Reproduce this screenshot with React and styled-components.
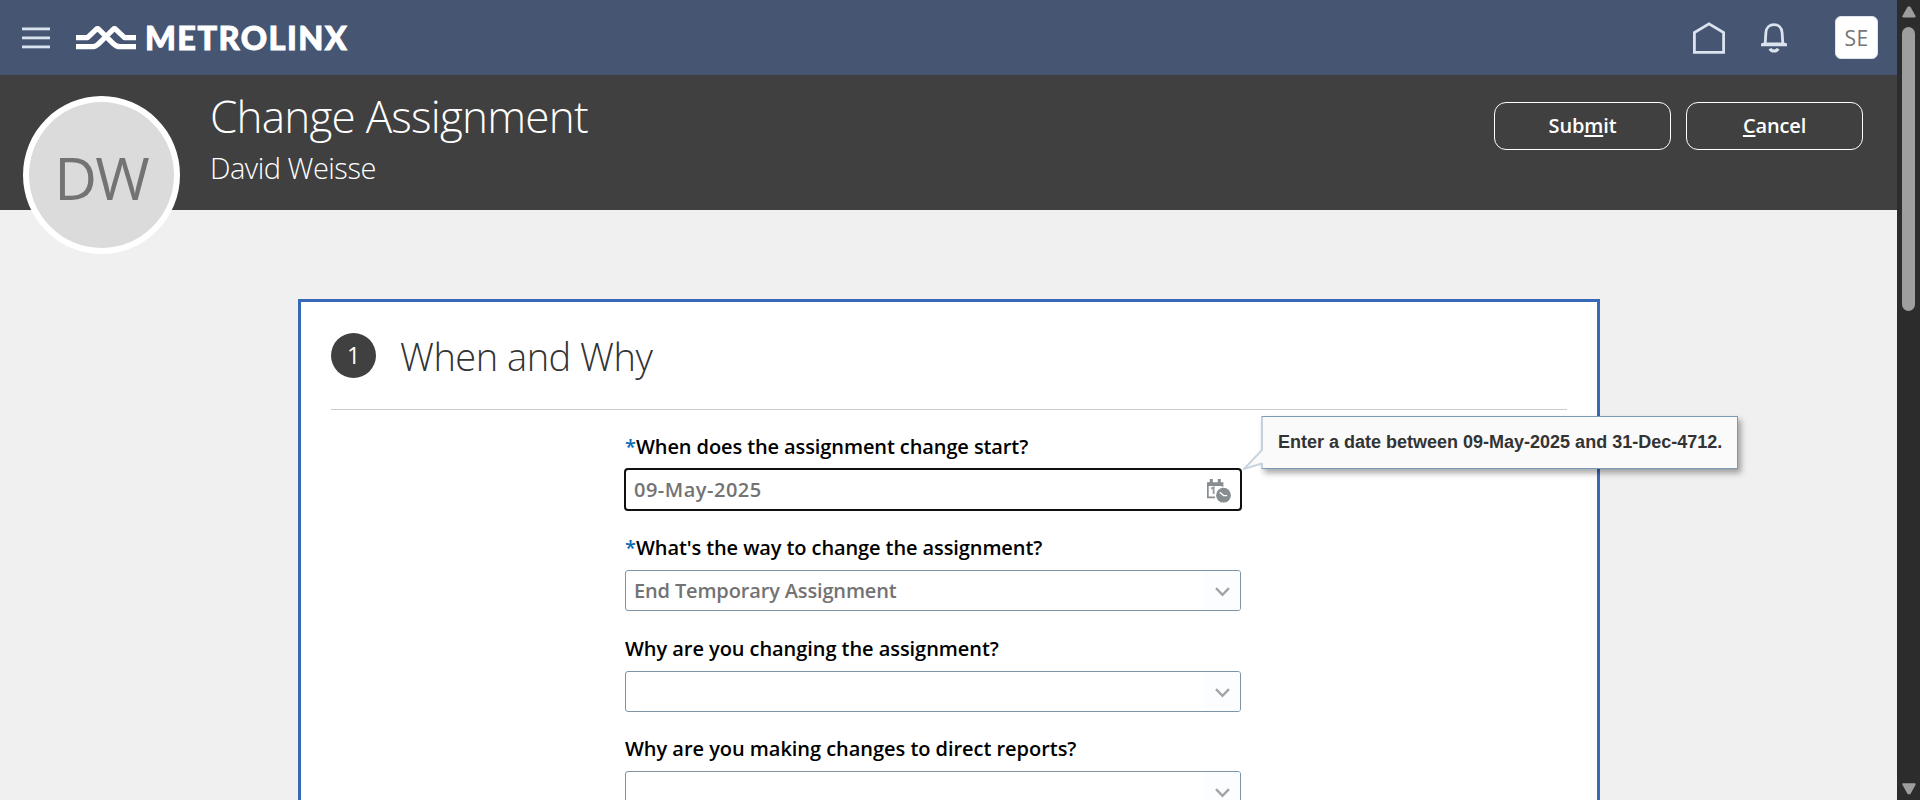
import React from "react";
import styled, { createGlobalStyle } from "styled-components";

const GlobalStyle = createGlobalStyle`
  * { box-sizing: border-box; }
  body { margin: 0; overflow: hidden; }
`;

const Screen = styled.div`
  display: flex;
  width: 1920px;
  height: 800px;
  overflow: hidden;
  font-family: "Open Sans", "Noto Sans", sans-serif;
`;

const Main = styled.div`
  flex: 1;
  min-width: 0;
  display: flex;
  flex-direction: column;
  background: #f0f0f0;
`;

const TopBar = styled.header`
  flex: none;
  display: flex;
  align-items: center;
  height: 75px;
  padding: 0 19px 0 22px;
  background: #465672;
`;

const Brand = styled.div`
  display: flex;
  align-items: center;
  gap: 9px;
  margin-left: 26px;
`;

const Wordmark = styled.span`
  font-family: Lato, sans-serif;
  font-weight: 900;
  font-size: 32.5px;
  line-height: 40px;
  letter-spacing: 1.45px;
  -webkit-text-stroke: 0.9px #fff;
  color: #fff;
`;

const TopActions = styled.div`
  display: flex;
  align-items: center;
  margin-left: auto;
`;

const UserTile = styled.div`
  display: flex;
  align-items: center;
  justify-content: center;
  width: 43px;
  height: 43px;
  margin-left: 48px;
  border: 1px solid #dde4ee;
  border-radius: 6px;
  background: #fff;
  color: #757575;
  font-size: 21px;
  letter-spacing: 0.3px;
`;

const Banner = styled.section`
  flex: none;
  display: flex;
  align-items: flex-start;
  height: 135px;
  padding: 21px 34px 0 23px;
  background: #404040;
  color: #fff;
`;

const Avatar = styled.div`
  flex: none;
  display: flex;
  align-items: center;
  justify-content: center;
  width: 157px;
  height: 158px;
  padding: 3px 1px 0 0;
  border: 6px solid #fff;
  border-radius: 50%;
  background: #dbdbdb;
  color: #737373;
  font-size: 59px;
  line-height: 80px;
  letter-spacing: -2px;
`;

const Titles = styled.div`
  margin-left: 30px;
`;

const Title = styled.h1`
  margin: -6px 0 0;
  font-weight: 300;
  font-size: 44px;
  line-height: 52px;
  letter-spacing: -0.77px;
`;

const Subtitle = styled.div`
  margin-top: 7px;
  font-weight: 300;
  font-size: 29px;
  line-height: 38px;
  letter-spacing: -0.5px;
`;

const Buttons = styled.div`
  display: flex;
  gap: 15px;
  margin: 6px 0 0 auto;
`;

const Button = styled.button`
  width: 177px;
  height: 48px;
  padding: 0 0 2px;
  border: 1px solid #fff;
  border-radius: 12px;
  background: transparent;
  color: #fff;
  font-family: inherit;
  font-weight: 600;
  font-size: 20px;
  letter-spacing: -0.15px;
`;

const AccessKey = styled.span`
  text-decoration: underline;
  text-decoration-thickness: 2px;
  text-underline-offset: 2px;
`;

const Card = styled.section`
  flex: none;
  width: 1302px;
  height: 540px;
  margin: 89px 0 0 298px;
  padding: 31px 30px 0;
  border: 3px solid #3869b8;
  background: #fff;
`;

const CardHead = styled.div`
  display: flex;
  align-items: center;
  height: 77px;
  padding-bottom: 32px;
  border-bottom: 1px solid #ccc;
`;

const Step = styled.span`
  display: flex;
  align-items: center;
  justify-content: center;
  width: 45px;
  height: 45px;
  border-radius: 50%;
  background: #404040;
  color: #fff;
  font-size: 23px;
`;

const CardTitle = styled.h2`
  margin: 2px 0 0 24px;
  font-weight: 300;
  font-size: 38px;
  line-height: 46px;
  letter-spacing: -0.5px;
  color: #333;
`;

const Form = styled.div`
  width: 616px;
  margin: 22px 0 0 294px;
`;

const Field = styled.div`
  height: ${(p) => p.$height || 101}px;
`;

const Label = styled.label`
  display: flex;
  height: 37px;
  font-weight: 600;
  font-size: 20px;
  line-height: 30px;
  letter-spacing: ${(p) => p.$track || "-0.1px"};
  white-space: pre;
  color: #000;
`;

const Required = styled.span`
  width: 11px;
  color: #0a6ab6;
`;

const Control = styled.div`
  position: relative;
  display: flex;
  align-items: center;
  justify-content: space-between;
  height: 41px;
  padding-left: 8px;
  border: 1px solid #7d94a6;
  border-radius: 3px;
  background: #fff;
  ${(p) =>
    p.$focused &&
    `border-color: #aaa; outline: 2px solid #101010; outline-offset: -1px;`}
`;

const Value = styled.span`
  font-weight: 600;
  font-size: 20px;
  line-height: 30px;
  letter-spacing: ${(p) => p.$track || "-0.15px"};
  color: #737373;
`;

const Toggle = styled.span`
  display: flex;
  align-items: center;
  justify-content: center;
  width: 36px;
  height: 39px;
  margin-left: auto;
  padding-top: 3px;
  border-radius: 0 2px 2px 0;
  background: #fcfdfe;
`;

const DateButton = styled.span`
  display: flex;
  width: 24px;
  margin: 2px 9px 0 0;
`;

const Hint = styled.div`
  position: absolute;
  left: 635px;
  top: -54px;
  display: flex;
  align-items: center;
  width: 477px;
  height: 53px;
  padding: 0 0 1px 15px;
  border: 1px solid #7b98b6;
  border-left: 2px solid #c3d0dd;
  background: #fafafa;
  box-shadow: 3px 4px 6px rgba(0, 0, 0, 0.35);
  font-family: "Liberation Sans", sans-serif;
  font-weight: 700;
  font-size: 18px;
  white-space: nowrap;
  color: #333;
`;

const Pointer = styled.svg`
  position: absolute;
  left: -20px;
  top: 32px;
`;

const ScrollTrack = styled.aside`
  flex: none;
  display: flex;
  flex-direction: column;
  align-items: center;
  width: 23px;
  padding: 6px 0 5px;
  background: #2c2c2c;
`;

const Thumb = styled.div`
  width: 13px;
  height: 284px;
  margin: 9px 0 auto;
  border-radius: 7px;
  background: #9e9e9e;
`;

const MenuIcon = () => (
  <svg width="28" height="22" viewBox="0 0 28 22" fill="#d9e3ef">
    <rect y="0.5" width="28" height="2.8" />
    <rect y="9.5" width="28" height="2.8" />
    <rect y="18.5" width="28" height="2.8" />
  </svg>
);

const WaveMark = () => (
  <svg width="60" height="26" viewBox="0 0 60 26" fill="none" stroke="#fff" strokeWidth="5.2" strokeLinejoin="round">
    <path d="M0 12.6H11.5L20.2 4.3Q21.5 3 22.8 4.3L37.5 18.8Q40.5 21.7 44 21.7H60" />
    <path d="M0 21.7H16Q19.5 21.7 22.5 18.8L37.2 4.3Q38.5 3 39.8 4.3L48.5 12.6H60" />
  </svg>
);

const HomeIcon = () => (
  <svg width="32" height="32" viewBox="0 0 32 32" fill="none" stroke="#dbe3ee" strokeWidth="2.8">
    <path d="M1.4 30.3V10.6L16 1.8L30.6 10.6V30.3Z" />
  </svg>
);

const Bell = styled.svg`
  margin-left: 36px;
`;

const BellIcon = () => (
  <Bell width="26" height="30" viewBox="0 0 26 30" fill="none" stroke="#dbe3ee">
    <path d="M4.2 20.2L4.9 9.5C5.3 4.6 8.6 1.7 13 1.7S20.7 4.6 21.1 9.5L21.8 20.2" strokeWidth="2.8" />
    <path d="M0 23.2V20.6L3.2 19.4H22.8L26 20.6V23.2Z" fill="#dbe3ee" stroke="none" />
    <path d="M9 25.6C10.2 28.8 15.8 28.8 17 25.6" strokeWidth="3" />
  </Bell>
);

const CalendarIcon = () => (
  <svg width="24" height="24" viewBox="0 0 24 24">
    <path d="M0 3.2H2.8V0H5.8V3.2H10.8V0H13.8V3.2H16.4V8.5H14.8V7H1.7V17.6H8V19.3H0Z" fill="#878c90" />
    <path d="M4 9.7L6.6 8.5V15" fill="none" stroke="#9a9ea2" strokeWidth="1.9" />
    <circle cx="16.5" cy="16.2" r="8.6" fill="#fff" />
    <circle cx="16.5" cy="16.2" r="7.4" fill="#878c90" />
    <path d="M12.8 13.2L16.6 16.6H20.2" fill="none" stroke="#fff" strokeWidth="1.4" />
  </svg>
);

const Chevron = () => (
  <svg width="15" height="10" viewBox="0 0 15 10" fill="none" stroke="#a0a5a9" strokeWidth="2.4">
    <path d="M1 1.2L7.5 7.8L14 1.2" />
  </svg>
);

const Arrow = ({ down }) => (
  <svg width="14" height="12" viewBox="0 0 14 12" fill="#9e9e9e" stroke="#9e9e9e" strokeWidth="2" strokeLinejoin="round">
    <path d={down ? "M1.3 1.2H12.7L7.7 10.3H6.3Z" : "M1.3 10.5H12.7L7.7 1.5H6.3Z"} />
  </svg>
);

function Select({ label, required, value, track, height }) {
  return (
    <Field $height={height}>
      <Label $track={track}>
        {required && <Required>*</Required>}
        {label}
      </Label>
      <Control>
        {value && <Value>{value}</Value>}
        <Toggle>
          <Chevron />
        </Toggle>
      </Control>
    </Field>
  );
}

export default function App() {
  return (
    <Screen>
      <GlobalStyle />
      <Main>
        <TopBar>
          <MenuIcon />
          <Brand>
            <WaveMark />
            <Wordmark>METROLINX</Wordmark>
          </Brand>
          <TopActions>
            <HomeIcon />
            <BellIcon />
            <UserTile>SE</UserTile>
          </TopActions>
        </TopBar>
        <Banner>
          <Avatar>DW</Avatar>
          <Titles>
            <Title>Change Assignment</Title>
            <Subtitle>David Weisse</Subtitle>
          </Titles>
          <Buttons>
            <Button>
              Sub<AccessKey>m</AccessKey>it
            </Button>
            <Button>
              <AccessKey>C</AccessKey>ancel
            </Button>
          </Buttons>
        </Banner>
        <Card>
          <CardHead>
            <Step>1</Step>
            <CardTitle>When and Why</CardTitle>
          </CardHead>
          <Form>
            <Field>
              <Label>
                <Required>*</Required>
                When does the assignment change start?
              </Label>
              <Control $focused>
                <Value $track="0.5px">09-May-2025</Value>
                <DateButton>
                  <CalendarIcon />
                </DateButton>
                <Hint>
                  Enter a date between 09-May-2025 and 31-Dec-4712.
                  <Pointer width="21" height="22" viewBox="0 0 21 22">
                    <path d="M20 1L1 20L20 14Z" fill="#fafafa" />
                    <path d="M19 1L1 20L19 14.5" fill="none" stroke="#c9d4df" strokeWidth="2" />
                  </Pointer>
                </Hint>
              </Control>
            </Field>
            <Select required label="What's the way to change the assignment?" value="End Temporary Assignment" />
            <Select label="Why are you changing the assignment?" height={100} track="-0.06px" />
            <Select label="Why are you making changes to direct reports?" track="-0.04px" />
          </Form>
        </Card>
      </Main>
      <ScrollTrack>
        <Arrow />
        <Thumb />
        <Arrow down />
      </ScrollTrack>
    </Screen>
  );
}
